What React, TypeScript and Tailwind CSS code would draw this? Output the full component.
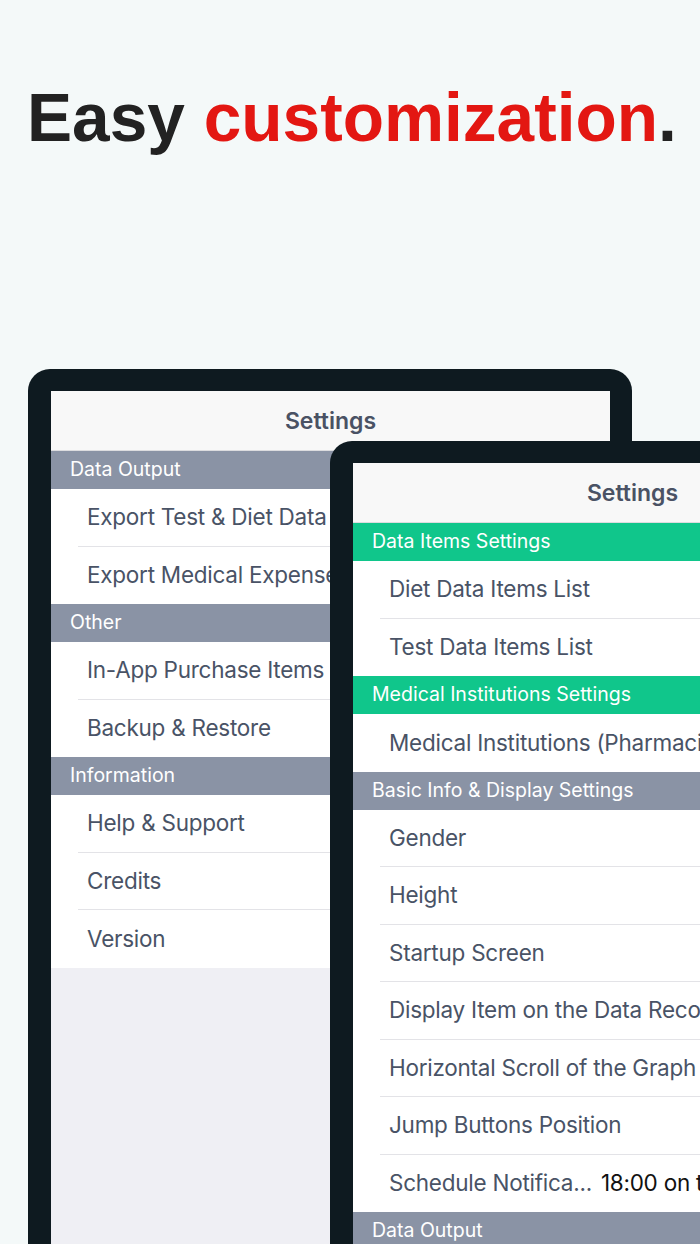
import React from "react";

type Section = {
  title: string;
  color: "gray" | "green";
  rows: { label: string; value?: string }[];
};

const backSections: Section[] = [
  {
    title: "Data Output",
    color: "gray",
    rows: [{ label: "Export Test & Diet Data" }, { label: "Export Medical Expenses" }],
  },
  {
    title: "Other",
    color: "gray",
    rows: [{ label: "In-App Purchase Items" }, { label: "Backup & Restore" }],
  },
  {
    title: "Information",
    color: "gray",
    rows: [{ label: "Help & Support" }, { label: "Credits" }, { label: "Version" }],
  },
];

const frontSections: Section[] = [
  {
    title: "Data Items Settings",
    color: "green",
    rows: [{ label: "Diet Data Items List" }, { label: "Test Data Items List" }],
  },
  {
    title: "Medical Institutions Settings",
    color: "green",
    rows: [{ label: "Medical Institutions (Pharmacies)" }],
  },
  {
    title: "Basic Info & Display Settings",
    color: "gray",
    rows: [
      { label: "Gender" },
      { label: "Height" },
      { label: "Startup Screen" },
      { label: "Display Item on the Data Recording Screen" },
      { label: "Horizontal Scroll of the Graph" },
      { label: "Jump Buttons Position" },
      { label: "Schedule Notifica...", value: "18:00 on the day before" },
    ],
  },
  {
    title: "Data Output",
    color: "gray",
    rows: [{ label: "Export Test & Diet Data" }],
  },
];

function SettingsList({ sections }: { sections: Section[] }) {
  return (
    <div className="flex flex-col">
      {sections.map((s, si) => (
        <div key={si} className="flex flex-col">
          <div
            className={
              (s.color === "green" ? "bg-[#10c68b]" : "bg-[#8a93a5]") +
              " h-[38px] flex items-center pl-[19px] text-[19.5px] text-white whitespace-nowrap"
            }
          >
            {s.title}
          </div>
          <div className="bg-white flex flex-col">
            {s.rows.map((r, ri) => (
              <div key={ri} className="h-[57.5px] flex flex-col pl-[27px]">
                <div className="flex-1 flex items-center pl-[9px] text-[22.5px] tracking-[-0.25px] text-[#495366] whitespace-nowrap">
                  <span>{r.label}</span>
                  {r.value && <span className="ml-[9px] text-[#111111]">{r.value}</span>}
                </div>
                {ri < s.rows.length - 1 && <div className="h-px bg-[#e3e3e7]" />}
              </div>
            ))}
          </div>
        </div>
      ))}
    </div>
  );
}

function Tablet({ sections }: { sections: Section[] }) {
  return (
    <div className="w-[604px] h-[1000px] rounded-[22px] bg-[#0e1a20] pl-[23px] pr-[22px] pt-[22px]">
      <div className="h-full bg-[#efeff4] flex flex-col overflow-hidden">
        <div className="h-[60px] shrink-0 bg-[#f8f8f8] border-b border-[#dcdcdf] flex items-center justify-center pt-[2px] text-[23px] font-semibold text-[#4a5264]">
          Settings
        </div>
        <SettingsList sections={sections} />
      </div>
    </div>
  );
}

export default function App() {
  return (
    <div
      className="relative w-[700px] h-[1244px] overflow-hidden bg-[#f4f9f9]"
      style={{ fontFamily: "Inter, 'Noto Sans', sans-serif" }}
    >
      <h1
        className="h-[152px] pt-[84px] pl-[27px] text-[67.6px] leading-none font-bold text-[#222222] whitespace-nowrap"
        style={{ fontFamily: "'Liberation Sans', Arial, sans-serif" }}
      >
        Easy <span className="text-[#e31712]">customization</span>.
      </h1>
      <div className="mt-[217px] ml-[28px]">
        <Tablet sections={backSections} />
      </div>
      <div className="absolute left-[330px] top-[441px]">
        <Tablet sections={frontSections} />
      </div>
    </div>
  );
}
